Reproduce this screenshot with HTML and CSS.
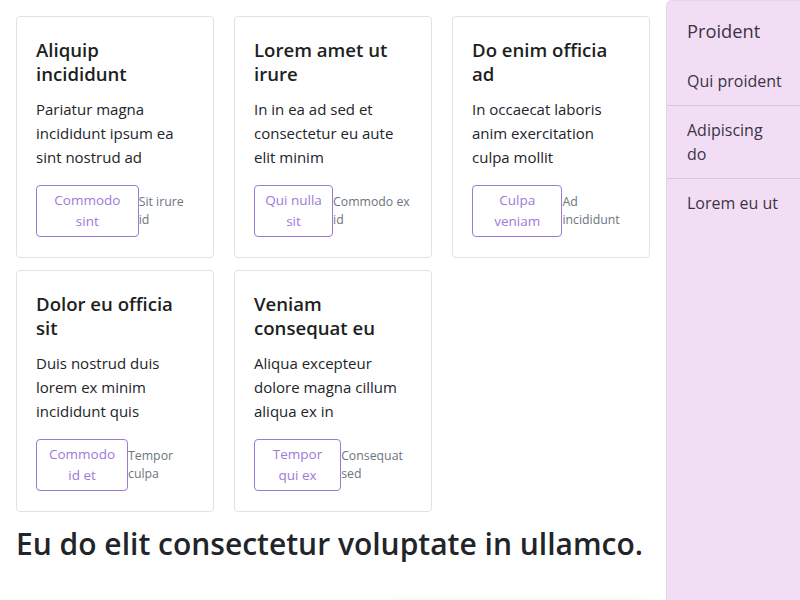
FILE: index.html
```html
<!DOCTYPE html>
<html lang="en">
<head>
<meta charset="utf-8">
<title>Cards</title>
<link rel="stylesheet" href="styles.css">
</head>
<body>
<div class="layout">
  <main class="main">
    <div class="grid">
      <div class="card">
        <h3 class="card-title">Aliquip incididunt</h3>
        <p class="card-text">Pariatur magna incididunt ipsum ea sint nostrud ad</p>
        <div class="card-actions">
          <button class="btn">Commodo sint</button>
          <span class="meta">Sit irure id</span>
        </div>
      </div>
      <div class="card">
        <h3 class="card-title">Lorem amet ut irure</h3>
        <p class="card-text">In in ea ad sed et consectetur eu aute elit minim</p>
        <div class="card-actions">
          <button class="btn">Qui nulla sit</button>
          <span class="meta">Commodo ex id</span>
        </div>
      </div>
      <div class="card">
        <h3 class="card-title">Do enim officia ad</h3>
        <p class="card-text">In occaecat laboris anim exercitation culpa mollit</p>
        <div class="card-actions">
          <button class="btn">Culpa veniam</button>
          <span class="meta">Ad incididunt</span>
        </div>
      </div>
      <div class="card">
        <h3 class="card-title">Dolor eu officia sit</h3>
        <p class="card-text">Duis nostrud duis lorem ex minim incididunt quis</p>
        <div class="card-actions">
          <button class="btn">Commodo id et</button>
          <span class="meta">Tempor culpa</span>
        </div>
      </div>
      <div class="card">
        <h3 class="card-title">Veniam consequat eu</h3>
        <p class="card-text">Aliqua excepteur dolore magna cillum aliqua ex in</p>
        <div class="card-actions">
          <button class="btn">Tempor qui ex</button>
          <span class="meta">Consequat sed</span>
        </div>
      </div>
    </div>
    <h2 class="headline">Eu do elit consectetur voluptate in ullamco.</h2>
    <div class="panel"></div>
  </main>
  <aside class="sidebar">
    <div class="sidebar-title">Proident</div>
    <ul class="sidebar-list">
      <li class="sidebar-item">Qui proident</li>
      <li class="sidebar-item">Adipiscing do</li>
      <li class="sidebar-item">Lorem eu ut</li>
    </ul>
  </aside>
</div>
</body>
</html>
```

FILE: styles.css
```css
* { box-sizing: border-box; }

html, body {
  margin: 0;
  padding: 0;
  height: 100%;
  overflow: hidden;
}

body {
  font-family: "Open Sans", "Noto Sans", "Liberation Sans", sans-serif;
  color: #212529;
  background: #ffffff;
}

.layout {
  display: flex;
  min-height: 100vh;
}

.main {
  flex: 1;
  min-width: 0;
  padding: 16px;
}

.grid {
  display: grid;
  grid-template-columns: repeat(3, 1fr);
  column-gap: 20px;
  row-gap: 12px;
}

.card {
  border: 1px solid #dee2e6;
  border-radius: 4px;
  padding: 20px 19px 20px 19px;
  background: #fff;
}

.card-title {
  margin: 1px 0 11px;
  font-size: 18.6px;
  line-height: 24px;
  font-weight: 600;
  color: #1d1f22;
}

.card-text {
  margin: 0 0 16px;
  font-size: 15px;
  line-height: 24px;
  color: #212529;
}

.card-actions {
  display: flex;
  align-items: center;
}

.btn {
  font-family: inherit;
  font-size: 13.5px;
  line-height: 21px;
  color: #9d7ad9;
  background: #fff;
  border: 1px solid #9b7bd4;
  border-radius: 4px;
  padding: 4px 8px;
  text-align: center;
}

.meta {
  flex-shrink: 0.7;
  font-size: 12.3px;
  line-height: 18px;
  color: #6c757d;
}

.headline {
  margin: 14px 0 0;
  font-size: 30px;
  line-height: 1.2;
  font-weight: 600;
  color: #212529;
  white-space: nowrap;
}

.panel {
  margin: 40px 5px 0 auto;
  width: 255px;
  height: 60px;
  box-shadow: 0 0 12px rgba(0, 0, 0, 0.06);
  border-radius: 6px;
}

.sidebar {
  width: 134px;
  flex-shrink: 0;
  background: #f2def4;
  border: 1px solid #e2d6e8;
  border-right: 0;
  border-bottom: 0;
  border-top-left-radius: 6px;
  color: #3a3444;
}

.sidebar-title {
  font-size: 18.3px;
  line-height: 27px;
  padding: 16px 20px 13px;
}

.sidebar-list {
  list-style: none;
  margin: 0;
  padding: 0;
}

.sidebar-item {
  font-size: 16px;
  line-height: 24px;
  padding: 12px 16px 12px 20px;
  border-bottom: 1px solid #d8c6de;
}

.sidebar-item:last-child {
  border-bottom: 0;
}
```
